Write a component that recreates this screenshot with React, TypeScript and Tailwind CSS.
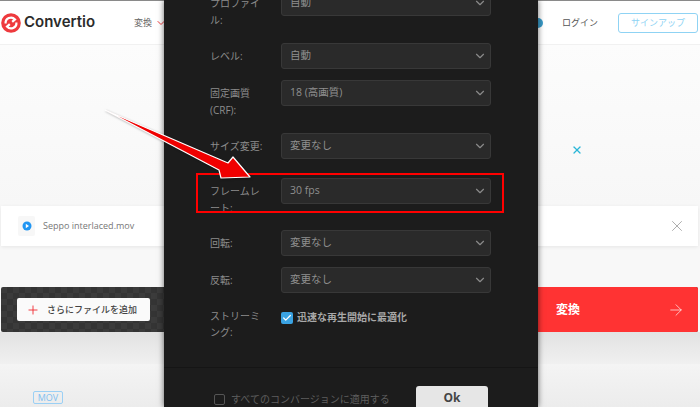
import React from "react";
import { ChevronDown, Check, Plus, X, ArrowRight } from "lucide-react";

const font = "font-['Open_Sans','Noto_Sans_CJK_JP',sans-serif]";

function Logo() {
  return (
    <svg width="20" height="20" viewBox="0 0 20 20">
      <circle cx="10" cy="10" r="9.8" fill="#ee3a3e" />
      <path d="M4.6 10.5 A5.4 5.4 0 0 1 14 6.4 L11.2 8.8 M15.4 9.5 A5.4 5.4 0 0 1 6 13.6 L8.8 11.2" fill="none" stroke="#fff" strokeWidth="2.2" />
    </svg>
  );
}

function Row({ label, value }: { label: React.ReactNode; value: string }) {
  return (
    <div className="flex items-start">
      <div className="w-[71px] pt-[5px] text-[10px] leading-[17px] text-[#8c8c8c]">{label}</div>
      <div className="flex h-[26px] w-[210px] items-center justify-between rounded-[3px] border border-[#383838] bg-[#2a2a2a] pl-[8px] pr-[3px] text-[10.5px] text-[#8f8f8f]">
        <span>{value}</span>
        <ChevronDown size={14} className="text-[#8a8a8a]" />
      </div>
    </div>
  );
}

export default function App() {
  return (
    <div className={`${font} relative h-[407px] w-[700px] overflow-hidden bg-[#f8f8f8]`}>
      {/* ページ本体 */}
      <div className="h-[1px] bg-[#8a8a8a]" />
      <div className="relative flex h-[44px] items-center justify-between border-b border-[#f1f1f1] bg-white pl-[1px] pr-[2px]">
        <div className="flex items-center">
          <Logo />
          <span className="ml-[3px] font-['Inter',sans-serif] text-[15px] font-semibold text-[#2b2b2b]">Convertio</span>
          <span className="ml-[39px] text-[9px] text-[#666]">変換</span>
          <ChevronDown size={12} className="ml-[3px] text-[#f0393d]" />
        </div>
        <span className="absolute left-[533px] top-[17px] h-[10px] w-[10px] rounded-full bg-[#3a9bc9]" />
        <div className="flex items-center">
          <span className="mr-[20px] text-[9px] text-[#555]">ログイン</span>
          <span className="flex h-[20px] w-[80px] items-center justify-center rounded-[3px] border border-[#8fd3f4] text-[9px] text-[#8fd3f4]">サインアップ</span>
        </div>
      </div>
      <div className="h-[161px] bg-gradient-to-b from-[#fcfcfc] to-[#f7f7f7]" />
      <div className="ml-[1px] mr-[2px] flex h-[40px] items-center justify-between bg-white pl-[17px] pr-[12px] shadow-[0_1px_4px_rgba(0,0,0,0.08)]">
        <div className="flex items-center">
          <span className="flex h-[20px] w-[17px] items-center justify-center rounded-[2px] bg-[#f7f7f7]">
            <svg width="10" height="10" viewBox="0 0 10 10">
              <circle cx="5" cy="5" r="4.5" fill="#2196f3" />
              <path d="M3.8 2.8 L7 5 L3.8 7.2Z" fill="#fff" />
            </svg>
          </span>
          <span className="ml-[8px] text-[9px] text-[#777]">Seppo interlaced.mov</span>
        </div>
        <X size={18} strokeWidth={0.8} className="text-[#777]" />
      </div>
      <div className="h-[41px]" />
      <div className="ml-[1px] mr-[2px] flex h-[45px] items-center justify-between rounded-[2px] bg-[repeating-conic-gradient(#343434_0%_25%,#3b3b3b_0%_50%)] bg-[length:12px_12px] pl-[16px]">
        <div className="flex h-[23px] w-[133px] items-center rounded-[2px] bg-[#fafafa] pl-[9px] text-[9px] font-medium text-[#444]">
          <Plus size={14} strokeWidth={1.5} className="text-[#f0262c]" />
          <span className="ml-[7px]">さらにファイルを追加</span>
        </div>
        <div className="flex h-[45px] w-[240px] items-center justify-between rounded-r-[2px] bg-[#ff3333] pl-[98px] pr-[13px] text-[12px] font-bold text-white">
          <span>変換</span>
          <ArrowRight size={18} strokeWidth={0.9} />
        </div>
      </div>
      <div className="h-[32px] bg-gradient-to-b from-[#e2e2e2] to-[#f0f0f0]" />
      <div className="h-[43px] bg-gradient-to-b from-[#f4f4f4] to-[#ececec] pl-[33px] pt-[27px]">
        <div className="flex h-[13px] w-[30px] items-center justify-center rounded-[2px] border border-[#9bd0f5] text-[9px] text-[#7fc0f0]">MOV</div>
      </div>

      {/* 設定モーダル */}
      <div className="absolute left-[164px] top-0 h-[407px] w-[374px] bg-[#1c1c1c] shadow-[0_0_6px_rgba(0,0,0,0.6)]">
        <div className="mt-[-10px] flex flex-col pl-[46px]">
          <div className="h-[53px]">
            <Row label={<>プロファイ<br />ル:</>} value="自動" />
          </div>
          <div className="h-[37px]">
            <Row label="レベル:" value="自動" />
          </div>
          <div className="h-[53px]">
            <Row label={<>固定画質<br />(CRF):</>} value="18 (高画質)" />
          </div>
          <div className="h-[45px]">
            <Row label="サイズ変更:" value="変更なし" />
          </div>
          <div className="h-[52px]">
            <Row label={<>フレームレ<br />ート:</>} value="30 fps" />
          </div>
          <div className="h-[37px]">
            <Row label="回転:" value="変更なし" />
          </div>
          <div className="h-[40px]">
            <Row label="反転:" value="変更なし" />
          </div>
          <div className="flex items-start">
            <div className="w-[71px] pt-[1px] text-[10px] leading-[16px] text-[#8c8c8c]">ストリーミ<br />ング:</div>
            <div className="flex items-center pt-[3px] text-[10px] font-semibold text-[#a8a8a8]">
              <span className="flex h-[12px] w-[12px] items-center justify-center rounded-[2px] bg-[#3aa3e3]">
                <Check size={10} strokeWidth={3} className="text-white" />
              </span>
              <span className="ml-[4px]">迅速な再生開始に最適化</span>
            </div>
          </div>
        </div>
        <div className="absolute inset-x-0 bottom-0 flex h-[40px] items-start justify-between border-t border-[#151515] pl-[50px] pr-[50px]">
          <div className="flex items-center pt-[24px] text-[10px] text-[#5e5e5e]">
            <span className="h-[11px] w-[11px] rounded-[2px] border border-[#555]" />
            <span className="ml-[6px]">すべてのコンバージョンに適用する</span>
          </div>
          <div className="mt-[18px] flex h-[30px] w-[72px] items-start justify-center rounded-[3px] bg-[#e6e6e6] pt-[3px] text-[12px] font-bold text-[#444]">Ok</div>
        </div>
      </div>

      {/* 注釈 */}
      <div className="absolute left-[196px] top-[173px] h-[40px] w-[308px] border-2 border-[#ff0000]" />
      <svg className="absolute left-0 top-0" width="700" height="407" style={{ filter: "drop-shadow(1px 1px 1px rgba(0,0,0,0.3))" }}>
        <path d="M105 110 L228 163 L233 157 L250 177 L221 178 L219 170 Z" fill="#f00000" stroke="#fff" strokeWidth="1.2" strokeLinejoin="round" />
      </svg>
      <div className="absolute left-[571px] top-[144px]">
        <X size={12} strokeWidth={2.5} className="text-[#29b6d8]" />
      </div>
    </div>
  );
}
